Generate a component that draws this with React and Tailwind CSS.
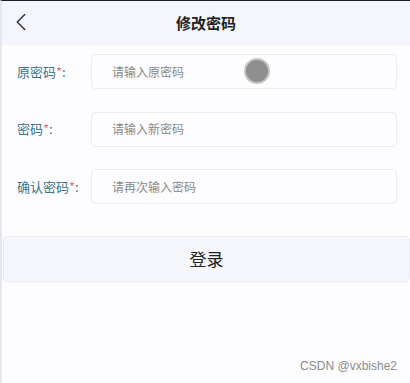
import { ChevronLeft } from 'lucide-react';

const fields = [
  { label: '原密码', placeholder: '请输入原密码' },
  { label: '密码', placeholder: '请输入新密码' },
  { label: '确认密码', placeholder: '请再次输入密码' },
];

export default function App() {
  return (
    <div
      className="relative w-[410px] h-[383px] overflow-hidden bg-[#fdfdff] border-t border-t-[#1b1b2a] border-l-2 border-l-[#e6e6f2]"
      style={{ fontFamily: '"Noto Sans CJK SC", "Noto Sans", sans-serif' }}
    >
      <div className="relative h-[44px] bg-[#f5f6fd] flex items-center justify-center">
        <ChevronLeft className="absolute left-[4px] top-[6px] h-[30px] w-[30px] text-[#333]" strokeWidth={1.2} />
        <span className="text-[15px] font-bold text-[#222]">修改密码</span>
      </div>

      <div className="flex flex-col gap-[22.5px] pt-[9px] pl-[15px] pr-[13px]">
        {fields.map((f) => (
          <div key={f.label} className="flex items-center h-[35px]">
            <div className="w-[74px] text-[13px] text-[#3b7489]">
              {f.label}<span className="text-[#e07080]">*</span>:
            </div>
            <div className="flex-1 h-[35px] border border-[#ececf6] rounded-[4px] bg-[#fdfdff] flex items-center pl-[20px] text-[12px] text-[#8a8a8a]">
              {f.placeholder}
            </div>
          </div>
        ))}
      </div>

      <div className="mt-[32px] ml-[1px] h-[46px] rounded-[4px] bg-[#f6f6fd] border border-[#ececf5] flex items-center justify-center text-[17px] text-[#222]">
        登录
      </div>

      <div className="absolute left-[242px] top-[57px] w-[26px] h-[26px] rounded-full bg-[#8f8f8f] border-2 border-[#c4c4c4]" />

      <div
        className="absolute right-[13px] bottom-[8px] text-[12px] text-[#8c8c8c]"
        style={{ fontFamily: '"Liberation Sans", sans-serif' }}
      >
        CSDN @vxbishe2
      </div>
    </div>
  );
}
